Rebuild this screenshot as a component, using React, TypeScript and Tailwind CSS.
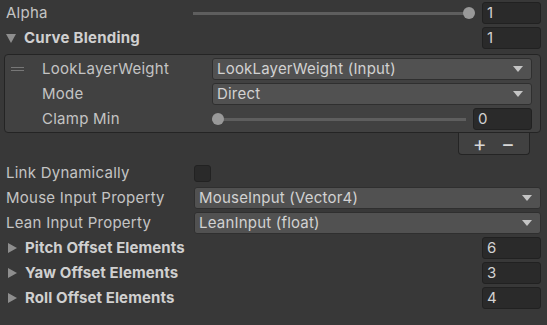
import React from "react";

const font = { fontFamily: "Inter, 'Noto Sans', sans-serif" };

const Caret = () => (
  <svg width="10" height="6" viewBox="0 0 10 6" className="shrink-0">
    <path d="M0 0 H10 L5 6 Z" fill="#c4c4c4" />
  </svg>
);

const FoldArrow = ({ open }: { open?: boolean }) =>
  open ? (
    <svg width="10" height="9" viewBox="0 0 10 9" className="shrink-0">
      <path d="M0 0 H10 L5 9 Z" fill="#8e8e8e" />
    </svg>
  ) : (
    <svg width="9" height="10" viewBox="0 0 9 10" className="shrink-0">
      <path d="M0 0 V10 L9 5 Z" fill="#8e8e8e" />
    </svg>
  );

const NumField = ({ value }: { value: string }) => (
  <div className="w-[59px] h-[22px] rounded-[3px] bg-[#2a2a2a] border border-[#212121] flex items-center px-[4px] text-[15px] text-[#d2d2d2]">
    {value}
  </div>
);

const Dropdown = ({ value }: { value: string }) => (
  <div className="flex-1 h-[22px] rounded-[3px] bg-[#515151] border border-[#2f2f2f] flex items-center justify-between pl-[4px] pr-[8px] text-[15px] tracking-[0.2px] text-[#d2d2d2]">
    <span>{value}</span>
    <Caret />
  </div>
);

const Slider = ({ pos }: { pos: "start" | "end" }) => (
  <div className="flex-1 relative h-[22px] flex items-center">
    <div className="w-full h-[3px] bg-[#5e5e5e]" />
    <div
      className={`absolute w-[12px] h-[12px] rounded-full bg-[#999999] ${
        pos === "end" ? "right-[-6px]" : "left-0"
      }`}
    />
  </div>
);

export default function App() {
  return (
    <div
      className="w-[547px] h-[325px] bg-[#383838] text-[#c4c4c4] text-[15px] tracking-[0.25px] overflow-hidden"
      style={font}
    >
      <div className="pt-[2px] pr-[6px]">
        {/* Alpha */}
        <div className="flex items-center h-[22px] mb-[3px]">
          <span className="w-[193px] pl-[6px]">Alpha</span>
          <div className="flex-1 flex items-center pr-[13px]">
            <Slider pos="end" />
          </div>
          <NumField value="1" />
        </div>

        {/* Curve Blending */}
        <div className="flex items-center h-[22px]">
          <div className="flex-1 flex items-center gap-[8px] pl-[6px] font-bold text-[#d0d0d0]">
            <FoldArrow open />
            <span>Curve Blending</span>
          </div>
          <div className="pl-[2px]">
            <NumField value="1" />
          </div>
        </div>

        {/* list box */}
        <div className="ml-[4px] mt-[5px] rounded-[4px] bg-[#414141] border border-[#242424] pt-[3px] pb-[2px] pr-[8px]">
          <div className="flex items-center h-[22px] mb-[3px]">
            <div className="w-[37px] flex flex-col gap-[2px] pl-[6px]">
              <div className="w-[13px] h-[1px] bg-[#777]" />
              <div className="w-[13px] h-[1px] bg-[#777]" />
            </div>
            <span className="w-[170px]">LookLayerWeight</span>
            <Dropdown value="LookLayerWeight (Input)" />
          </div>
          <div className="flex items-center h-[22px] mb-[3px]">
            <span className="w-[207px] pl-[37px]">Mode</span>
            <Dropdown value="Direct" />
          </div>
          <div className="flex items-center h-[22px]">
            <span className="w-[207px] pl-[37px]">Clamp Min</span>
            <div className="flex-1 flex items-center pr-[7px]">
              <Slider pos="start" />
            </div>
            <NumField value="0" />
          </div>
        </div>

        {/* +/- footer */}
        <div className="flex justify-end pr-[11px]">
          <div className="w-[72px] h-[22px] bg-[#414141] border border-t-0 border-[#242424] rounded-b-[4px] flex items-center justify-center gap-[14px] text-[#d8d8d8] text-[21px] leading-none">
            <span>+</span>
            <span>−</span>
          </div>
        </div>

        {/* Link Dynamically */}
        <div className="flex items-center h-[22px] mt-[7px] mb-[3px]">
          <span className="w-[194px] pl-[6px]">Link Dynamically</span>
          <div className="w-[17px] h-[17px] rounded-[3px] bg-[#2a2a2a] border border-[#222]" />
        </div>
        <div className="flex items-center h-[22px] mb-[3px]">
          <span className="w-[194px] pl-[6px]">Mouse Input Property</span>
          <Dropdown value="MouseInput (Vector4)" />
        </div>
        <div className="flex items-center h-[22px] mb-[3px]">
          <span className="w-[194px] pl-[6px]">Lean Input Property</span>
          <Dropdown value="LeanInput (float)" />
        </div>

        {[
          ["Pitch Offset Elements", "6"],
          ["Yaw Offset Elements", "3"],
          ["Roll Offset Elements", "4"],
        ].map(([label, val]) => (
          <div key={label} className="flex items-center h-[22px] mb-[3px]">
            <div className="flex-1 flex items-center gap-[8px] pl-[8px] font-bold text-[#d0d0d0] tracking-[0.1px]">
              <FoldArrow />
              <span>{label}</span>
            </div>
            <div className="pl-[2px]">
              <NumField value={val} />
            </div>
          </div>
        ))}
      </div>
    </div>
  );
}
